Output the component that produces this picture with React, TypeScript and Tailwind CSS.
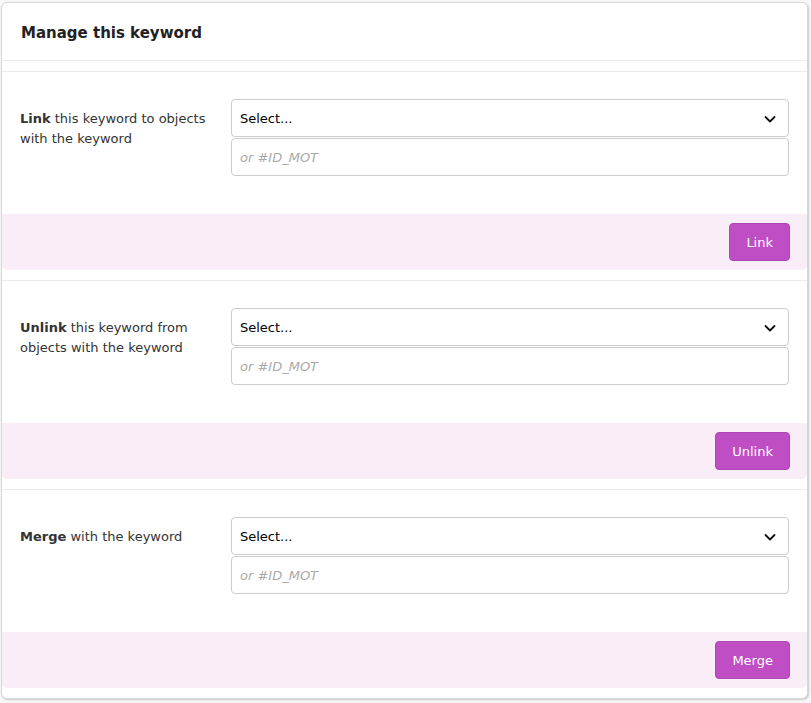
import React from "react";

const font = { fontFamily: '"DejaVu Sans", sans-serif' };

function Chevron() {
  return (
    <svg width="12" height="12" viewBox="0 0 12 12" className="shrink-0">
      <path d="M1.5 4 L6 8.5 L10.5 4" fill="none" stroke="#111" strokeWidth="1.8" strokeLinecap="round" strokeLinejoin="round" />
    </svg>
  );
}

function Section({ label, button }: { label: React.ReactNode; button: string }) {
  return (
    <div className="mt-[10px] border-t border-[#ebebeb]">
      <div className="flex px-[18px] pt-[27px] pb-[38px]">
        <div className="w-[211px] shrink-0 pt-[10px] pr-[14px] text-[13px] leading-[20px] text-[#333]">{label}</div>
        <div className="flex flex-1 flex-col">
          <div className="flex h-[38px] items-center justify-between rounded-[4px] border border-[#cccccc] bg-white pl-[8px] pr-[12px] pt-px text-[13px] text-black">
            <span>Select...</span>
            <Chevron />
          </div>
          <div className="mt-px flex h-[38px] items-center rounded-[4px] border border-[#cccccc] bg-white px-[8px] pt-px text-[13px] italic text-[#aaaaaa]">
            or #ID_MOT
          </div>
        </div>
      </div>
      <div className="flex h-[56px] items-center justify-end rounded-b-[5px] bg-[#f9eef8] px-[17px]">
        <button className="h-[38px] rounded-[4px] border border-[#b043b6] bg-[#bf4ec5] px-[16px] pt-px text-[13px] text-white">
          {button}
        </button>
      </div>
    </div>
  );
}

export default function App() {
  return (
    <div className="min-h-[703px] bg-[#f7f7f7] pt-[2px] pl-[1px]" style={font}>
      <div className="w-[807px] rounded-[6px] border border-[#d6d6d6] bg-white pb-[10px] shadow-[1px_1px_2px_rgba(0,0,0,0.18)]">
        <div className="flex h-[58px] items-center border-b border-[#ebebeb] px-[19px] pt-[3px]">
          <h1 className="text-[15px] font-bold text-[#222]">Manage this keyword</h1>
        </div>
        <Section
          label={
            <>
              <b>Link</b> this keyword to objects with the keyword
            </>
          }
          button="Link"
        />
        <Section
          label={
            <>
              <b>Unlink</b> this keyword from objects with the keyword
            </>
          }
          button="Unlink"
        />
        <Section
          label={
            <>
              <b>Merge</b> with the keyword
            </>
          }
          button="Merge"
        />
      </div>
    </div>
  );
}
